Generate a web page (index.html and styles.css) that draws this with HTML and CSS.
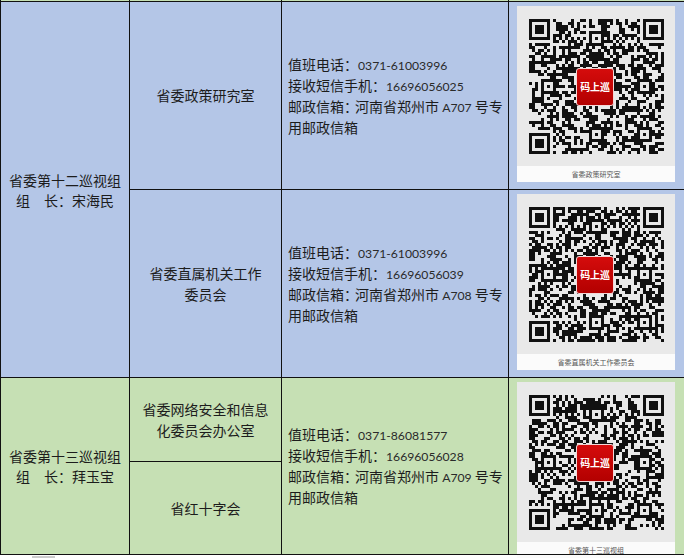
FILE: index.html
```html
<!DOCTYPE html>
<html lang="zh-CN">
<head>
<meta charset="utf-8">
<title>巡视组联系方式</title>
<link rel="stylesheet" href="styles.css">
</head>
<body>
<table class="sheet">
  <colgroup>
    <col class="c1"><col class="c2"><col class="c3"><col class="c4">
  </colgroup>
  <tr class="stub"><td></td><td></td><td></td><td></td></tr>
  <tr class="row-a blue">
    <td rowspan="2" class="group">省委第十二巡视组<br>组　长：宋海民</td>
    <td class="unit">省委政策研究室</td>
    <td class="contact">值班电话：<span class="num">0371-61003996</span><br>接收短信手机：<span class="num">16696056025</span><br>邮政信箱<span class="colon">：</span>河南省郑州市 <span class="num">A707</span> 号专<br>用邮政信箱</td>
    <td class="qr-cell">
      <div class="qr-card">
        <div class="qr-body">
          <svg class="qr" data-seed="11" viewBox="0 0 45 45" shape-rendering="crispEdges"></svg>
          <div class="qr-logo">码上巡</div>
        </div>
        <div class="qr-caption">省委政策研究室</div>
      </div>
    </td>
  </tr>
  <tr class="row-b blue">
    <td class="unit">省委直属机关工作<br>委员会</td>
    <td class="contact">值班电话：<span class="num">0371-61003996</span><br>接收短信手机：<span class="num">16696056039</span><br>邮政信箱<span class="colon">：</span>河南省郑州市 <span class="num">A708</span> 号专<br>用邮政信箱</td>
    <td class="qr-cell">
      <div class="qr-card">
        <div class="qr-body">
          <svg class="qr" data-seed="27" viewBox="0 0 45 45" shape-rendering="crispEdges"></svg>
          <div class="qr-logo">码上巡</div>
        </div>
        <div class="qr-caption">省委直属机关工作委员会</div>
      </div>
    </td>
  </tr>
  <tr class="row-c green">
    <td rowspan="2" class="group">省委第十三巡视组<br>组　长：拜玉宝</td>
    <td class="unit">省委网络安全和信息<br>化委员会办公室</td>
    <td rowspan="2" class="contact">值班电话：<span class="num">0371-86081577</span><br>接收短信手机：<span class="num">16696056028</span><br>邮政信箱<span class="colon">：</span>河南省郑州市 <span class="num">A709</span> 号专<br>用邮政信箱</td>
    <td rowspan="2" class="qr-cell">
      <div class="qr-card qr-card-last">
        <div class="qr-body">
          <svg class="qr" data-seed="53" viewBox="0 0 45 45" shape-rendering="crispEdges"></svg>
          <div class="qr-logo">码上巡</div>
        </div>
        <div class="qr-caption">省委第十三巡视组</div>
      </div>
    </td>
  </tr>
  <tr class="row-d green">
    <td class="unit">省红十字会</td>
  </tr>
</table>
<div class="tick"></div>
<script src="script.js"></script>
</body>
</html>
```

FILE: styles.css
```css
html, body {
  margin: 0;
  padding: 0;
  overflow: hidden;
  background: #ffffff;
}

body {
  width: 684px;
  height: 559px;
  font-family: "Noto Sans CJK SC", sans-serif;
  font-size: 14px;
  color: #1c1c1c;
}

.sheet {
  border-collapse: collapse;
  table-layout: fixed;
  width: 685px;
}

.c1 { width: 129px; }
.c2 { width: 152px; }
.c3 { width: 227px; }
.c4 { width: 177px; }

.sheet td {
  border: 1px solid #111111;
  padding: 0;
}

.stub td {
  height: 1px;
  border-top: none;
  background: #c6e0b4;
}

.row-a, .row-b { height: 188px; }
.row-c { height: 84px; }
.row-d { height: 93px; }

.blue td { background: #b4c6e7; }
.green td { background: #c6e0b4; }

.group,
.unit {
  text-align: center;
  vertical-align: middle;
  line-height: 20px;
}

.unit { line-height: 21px; }

.contact {
  vertical-align: middle;
  padding-left: 6px !important;
  line-height: 21px;
  white-space: nowrap;
}

.num {
  font-family: "Lato", sans-serif;
  font-size: 12.2px;
  line-height: 1;
  color: #2a2a2a;
}

.colon {
  font-family: "Noto Sans CJK JP", sans-serif;
  letter-spacing: -3px;
}

.qr-cell {
  vertical-align: top;
  padding: 4px 0 0 8px !important;
}

.qr-card {
  width: 158px;
  background: #fbfbfb;
}

.qr-card-last {
  margin-bottom: -10px;
}

.qr-body {
  position: relative;
  height: 160px;
  background: #e9e9e9;
  display: flex;
  align-items: center;
  justify-content: center;
}

.qr {
  width: 135px;
  height: 135px;
  display: block;
}

.qr-logo {
  position: absolute;
  left: 59px;
  top: 62px;
  width: 38px;
  height: 38px;
  box-sizing: border-box;
  border: 1px solid #f3d6d6;
  border-radius: 3px;
  background: linear-gradient(#d50c0c, #b30000);
  color: #ffffff;
  font-weight: bold;
  font-size: 10px;
  line-height: 36px;
  text-align: center;
  letter-spacing: -0.2px;
}

.qr-caption {
  height: 16px;
  line-height: 16px;
  text-align: center;
  font-size: 7px;
  color: #555555;
}

.tick {
  width: 23px;
  height: 2px;
  margin: 1px 0 0 32px;
  background: #cccccc;
}
```

FILE: script.js
```js
(function () {
  function mulberry32(a) {
    return function () {
      a |= 0; a = a + 0x6D2B79F5 | 0;
      var t = Math.imul(a ^ a >>> 15, 1 | a);
      t = t + Math.imul(t ^ t >>> 7, 61 | t) ^ t;
      return ((t ^ t >>> 14) >>> 0) / 4294967296;
    };
  }
  var N = 45;
  var svgs = document.querySelectorAll('.qr');
  Array.prototype.forEach.call(svgs, function (svg) {
    var rnd = mulberry32(+svg.getAttribute('data-seed'));
    var grid = [], fixed = [];
    var x, y, i;
    for (y = 0; y < N; y++) {
      grid.push(new Array(N).fill(0));
      fixed.push(new Array(N).fill(false));
    }
    function finder(ox, oy) {
      for (var dy = -1; dy <= 7; dy++) {
        for (var dx = -1; dx <= 7; dx++) {
          var gx = ox + dx, gy = oy + dy;
          if (gx < 0 || gy < 0 || gx >= N || gy >= N) continue;
          fixed[gy][gx] = true;
          var inside = dx >= 0 && dx <= 6 && dy >= 0 && dy <= 6;
          var d = Math.max(Math.abs(dx - 3), Math.abs(dy - 3));
          grid[gy][gx] = inside && (d === 3 || d <= 1) ? 1 : 0;
        }
      }
    }
    finder(0, 0); finder(N - 7, 0); finder(0, N - 7);
    for (i = 8; i < N - 8; i++) {
      grid[6][i] = grid[i][6] = (i % 2 === 0) ? 1 : 0;
      fixed[6][i] = fixed[i][6] = true;
    }
    var centers = [6, 22, 38];
    centers.forEach(function (cy) {
      centers.forEach(function (cx) {
        if ((cx === 6 && cy === 6) || (cx === 6 && cy === 38) || (cx === 38 && cy === 6)) return;
        for (var dy = -2; dy <= 2; dy++) {
          for (var dx = -2; dx <= 2; dx++) {
            var d = Math.max(Math.abs(dx), Math.abs(dy));
            grid[cy + dy][cx + dx] = (d === 2 || d === 0) ? 1 : 0;
            fixed[cy + dy][cx + dx] = true;
          }
        }
      });
    });
    for (y = 0; y < N; y++) {
      for (x = 0; x < N; x++) {
        if (!fixed[y][x]) grid[y][x] = rnd() < 0.52 ? 1 : 0;
      }
    }
    var d = '';
    for (y = 0; y < N; y++) {
      for (x = 0; x < N; x++) {
        if (grid[y][x]) d += 'M' + x + ' ' + y + 'h1v1h-1z';
      }
    }
    var path = document.createElementNS('http://www.w3.org/2000/svg', 'path');
    path.setAttribute('d', d);
    path.setAttribute('fill', '#111');
    svg.appendChild(path);
  });
})();
```
